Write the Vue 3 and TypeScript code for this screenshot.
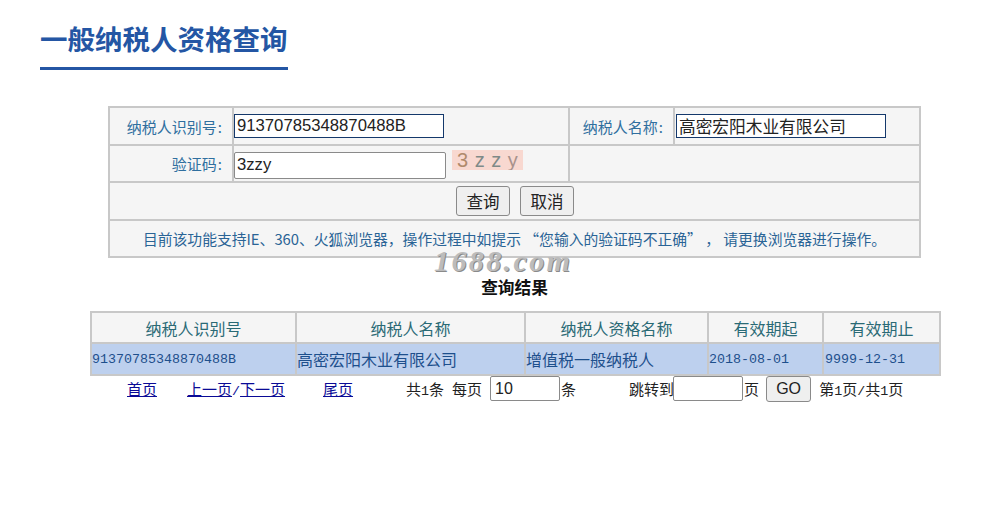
<script setup lang="ts">
const headers: string[] = ['纳税人识别号', '纳税人名称', '纳税人资格名称', '有效期起', '有效期止']
</script>

<template>
  <div class="page">
    <header class="title-wrap">
      <h1 class="title">一般纳税人资格查询</h1>
    </header>

    <table class="form-table">
      <colgroup>
        <col style="width: 124px" />
        <col style="width: 336px" />
        <col style="width: 105px" />
        <col style="width: 246px" />
      </colgroup>
      <tbody>
        <tr class="r1">
          <td class="label">纳税人识别号<span class="colon">:</span></td>
          <td><input class="field focus-a" value="91370785348870488B" /></td>
          <td class="label">纳税人名称<span class="colon">:</span></td>
          <td><input class="field focus-b" value="高密宏阳木业有限公司" /></td>
        </tr>
        <tr class="r2">
          <td class="label">验证码<span class="colon">:</span></td>
          <td>
            <div class="captcha-row">
              <input class="field code" value="3zzy" />
              <span class="captcha"><b>3</b> z z <i>y</i></span>
            </div>
          </td>
          <td colspan="2"></td>
        </tr>
        <tr class="r3">
          <td colspan="4" class="actions">
            <button class="btn">查询</button>
            <button class="btn">取消</button>
          </td>
        </tr>
        <tr class="r4">
          <td colspan="4" class="note">目前该功能支持IE、360、火狐浏览器，操作过程中如提示 “您输入的验证码不正确” ， 请更换浏览器进行操作。</td>
        </tr>
      </tbody>
    </table>

    <div class="result-title">
      查询结果
      <span class="watermark">1688.com</span>
    </div>

    <table class="result-table">
      <colgroup>
        <col style="width: 205px" />
        <col style="width: 229px" />
        <col style="width: 183px" />
        <col style="width: 115px" />
        <col style="width: 117px" />
      </colgroup>
      <thead>
        <tr>
          <th v-for="h in headers" :key="h">{{ h }}</th>
        </tr>
      </thead>
      <tbody>
        <tr>
          <td class="mono">91370785348870488B</td>
          <td>高密宏阳木业有限公司</td>
          <td>增值税一般纳税人</td>
          <td class="mono">2018-08-01</td>
          <td class="mono end">9999-12-31</td>
        </tr>
      </tbody>
    </table>

    <nav class="pager">
      <a class="first">首页</a>
      <span class="prevnext"><a>上一页</a><span class="n">/</span><a>下一页</a></span>
      <a class="last">尾页</a>
      <span class="count">共<span class="n">1</span>条</span>
      <span class="per">每页</span>
      <input class="pager-input size" value="10" />
      <span class="unit">条</span>
      <span class="jump">跳转到</span>
      <input class="pager-input goto" />
      <span class="unit">页</span>
      <button class="go">GO</button>
      <span class="pos">第<span class="n">1</span>页<span class="n">/</span>共<span class="n">1</span>页</span>
    </nav>
  </div>
</template>

<style>
html, body { background: #fff; }
</style>

<style scoped>
.page {
  width: 1004px;
  height: 522px;
  overflow: hidden;
  font-family: "Noto Sans CJK SC", "Liberation Sans", sans-serif;
  background: #fff;
}
.title-wrap {
  margin-left: 40px;
  width: 248px;
  height: 70px;
  box-sizing: border-box;
  border-bottom: 3px solid #2456a4;
  padding-top: 18px;
}
.title {
  margin: 0;
  font-size: 27.5px;
  line-height: 40px;
  font-weight: 700;
  color: #2456a4;
  white-space: nowrap;
}
.form-table {
  margin: 36px 0 0 108px;
  width: 811px;
  table-layout: fixed;
  border-collapse: collapse;
  background: #f5f5f5;
  border: 2px solid #c8c8c8;
}
.form-table td {
  border: 2px solid #c8c8c8;
  padding: 0;
}
.r1 td { height: 36px; }
.r2 td { height: 35px; }
.r3 td { height: 36px; }
.r4 td { height: 35px; }
.label {
  text-align: right;
  padding-right: 10px !important;
  font-size: 15px;
  color: #2f6f9f;
}
.colon { margin-left: 1px; }
.field {
  display: block;
  box-sizing: border-box;
  font-family: "Liberation Sans", "Noto Sans CJK SC", sans-serif;
  font-size: 16.7px;
  color: #222;
  background: #fff;
  padding: 0 2px;
  outline: none;
}
.focus-a, .focus-b {
  width: 210px;
  height: 24px;
  border: 1px solid #14386b;
}
.focus-b { margin-left: 1px; }
.code {
  width: 212px;
  height: 27px;
  border: 1px solid #8a8a8a;
  border-radius: 2px;
  margin-top: 5px;
}
.captcha-row {
  display: flex;
  align-items: flex-start;
  height: 34px;
}
.captcha {
  margin: 3px 0 0 6px;
  width: 71px;
  height: 20px;
  box-sizing: border-box;
  padding-left: 5px;
  background: #f8d8d0;
  font-family: "Liberation Sans", sans-serif;
  font-size: 20px;
  line-height: 20px;
  letter-spacing: 0.5px;
  color: #7f8a88;
  white-space: nowrap;
  overflow: hidden;
}
.captcha b { font-weight: 400; color: #b08a6c; }
.captcha i { font-style: normal; color: #a8928c; }
.actions {
  padding-left: 346px !important;
}
.btn {
  width: 54px;
  height: 30px;
  box-sizing: border-box;
  margin: 0 10px 0 0;
  padding: 0;
  font-family: "Noto Sans CJK SC", sans-serif;
  font-size: 16.5px;
  line-height: 26px;
  color: #222;
  background: #efefef;
  border: 1px solid #8a8a8a;
  border-radius: 3px;
  vertical-align: middle;
}
.note {
  font-size: 14.8px;
  line-height: 20px;
  color: #2a6496;
  text-align: center;
}
.result-title {
  position: relative;
  height: 53px;
  box-sizing: border-box;
  padding-top: 18px;
  text-align: center;
  width: 1029px;
  font-size: 16.7px;
  line-height: 22px;
  font-weight: 700;
  color: #111;
}
.watermark {
  position: absolute;
  left: 434px;
  top: -8px;
  font-family: "Liberation Serif", serif;
  font-size: 30px;
  line-height: 22px;
  font-style: italic;
  font-weight: 700;
  letter-spacing: 2.4px;
  color: #bcbcbc;
  text-shadow: 1px 1px 0 #8a8a8a;
}
.result-table {
  margin-left: 90px;
  width: 849px;
  table-layout: fixed;
  border-collapse: collapse;
  border: 2px solid #c8c8c8;
}
.result-table th,
.result-table td {
  border: 2px solid #c8c8c8;
  padding: 0;
  font-size: 16px;
  font-weight: 400;
  white-space: nowrap;
  box-sizing: border-box;
}
.result-table th {
  height: 31px;
  background: #f5f5f5;
  color: #2a6a75;
  text-align: center;
}
.result-table td {
  height: 32px;
  background: #bdd0ee;
  color: #1d4f8c;
  text-align: left;
}
.mono {
  font-family: "Liberation Mono", monospace;
  font-size: 13.33px !important;
}
.end { padding-left: 1px !important; }
.pager {
  display: flex;
  align-items: center;
  height: 25px;
  padding-left: 127px;
  font-size: 15px;
  font-weight: 400;
  color: #222;
  white-space: nowrap;
}
.pager a {
  color: #0a0a96;
  text-decoration: underline;
  cursor: pointer;
}
.n { font-family: "Liberation Mono", monospace; font-size: 13.33px; }
.prevnext { margin-left: 30px; width: 98px; color: #0a0a96; }
.last { margin-left: 38px; }
.count { margin-left: 53px; }
.per { margin-left: 8px; }
.pager-input {
  box-sizing: border-box;
  height: 25px;
  padding: 0 4px;
  background: #fff;
  border: 1px solid #8a8a8a;
  border-radius: 2px;
  font-family: "Liberation Sans", sans-serif;
  font-size: 16px;
  color: #222;
  outline: none;
}
.size { width: 70px; margin-left: 8px; }
.goto { width: 70px; margin-left: -1px; }
.unit { margin-left: 1px; }
.jump { margin-left: 53px; }
.go {
  width: 45px;
  height: 26px;
  box-sizing: border-box;
  margin-left: 7px;
  padding: 0;
  font-family: "Liberation Sans", sans-serif;
  font-size: 16px;
  color: #222;
  background: #efefef;
  border: 1px solid #8a8a8a;
  border-radius: 3px;
}
.pos { margin-left: 8px; }
</style>
